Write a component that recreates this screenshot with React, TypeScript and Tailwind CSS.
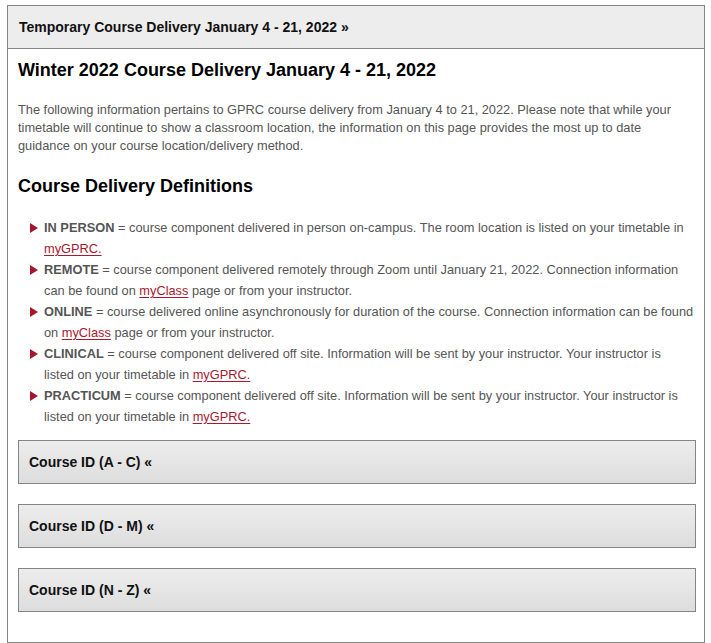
import type { ReactNode } from "react";

const LINK = "text-[#a6192e] underline underline-offset-2";

type Def = { label: string; body: ReactNode };

const DEFS: Def[] = [
  {
    label: "IN PERSON",
    body: (
      <>
        {" "}= course component delivered in person on-campus. The room location is listed on your timetable in{" "}
        <a className={LINK}>myGPRC.</a>
      </>
    ),
  },
  {
    label: "REMOTE",
    body: (
      <>
        {" "}= course component delivered remotely through Zoom until January 21, 2022. Connection information can be found on{" "}
        <a className={LINK}>myClass</a> page or from your instructor.
      </>
    ),
  },
  {
    label: "ONLINE",
    body: (
      <>
        {" "}= course delivered online asynchronously for duration of the course. Connection information can be found on{" "}
        <a className={LINK}>myClass</a> page or from your instructor.
      </>
    ),
  },
  {
    label: "CLINICAL",
    body: (
      <>
        {" "}= course component delivered off site. Information will be sent by your instructor. Your instructor is listed on your timetable in{" "}
        <a className={LINK}>myGPRC.</a>
      </>
    ),
  },
  {
    label: "PRACTICUM",
    body: (
      <>
        {" "}= course component delivered off site. Information will be sent by your instructor. Your instructor is listed on your timetable in{" "}
        <a className={LINK}>myGPRC.</a>
      </>
    ),
  },
];

const SECTIONS = ["Course ID (A - C) «", "Course ID (D - M) «", "Course ID (N - Z) «"];

export default function App() {
  return (
    <div className="min-h-[643px] bg-white pt-[5px] font-['Liberation_Sans',Arial,sans-serif]">
      <div className="ml-[7px] w-[698px] border border-[#858585]">
        <div className="flex h-[43px] items-center border-b border-[#858585] bg-[#ededed] pl-[11px] text-[14px] font-bold text-[#111]">
          Temporary Course Delivery January 4 - 21, 2022 »
        </div>

        <div className="pl-[10px] pr-[8px] pb-[30px]">
          <h1 className="mt-[10px] text-[18px] font-bold leading-[22px] text-black">
            Winter 2022 Course Delivery January 4 - 21, 2022
          </h1>
          <p className="mt-[20px] pr-[10px] text-[12.8px] leading-[18px] text-[#555]">
            The following information pertains to GPRC course delivery from January 4 to 21, 2022. Please note that while your
            timetable will continue to show a classroom location, the information on this page provides the most up to date
            guidance on your course location/delivery method.
          </p>

          <h2 className="mt-[20px] text-[18px] font-bold leading-[22px] text-black">Course Delivery Definitions</h2>

          <ul className="mt-[20px] pl-[12px] pr-[2px] text-[12.8px] leading-[21px] text-[#555]">
            {DEFS.map((d) => (
              <li key={d.label} className="flex gap-[6px]">
                <span className="flex h-[21px] w-[8px] shrink-0 items-center">
                  <span className="h-0 w-0 border-y-[5px] border-l-[8px] border-y-transparent border-l-[#a3182c]" />
                </span>
                <span>
                  <b className="font-bold">{d.label}</b>
                  {d.body}
                </span>
              </li>
            ))}
          </ul>

          <div className="mt-[13px] flex flex-col gap-[20px]">
            {SECTIONS.map((s) => (
              <div
                key={s}
                className="flex h-[44px] items-center border border-[#858585] bg-gradient-to-b from-[#ededed] to-[#dddddd] pl-[10px] text-[14px] font-bold text-[#111]"
              >
                {s}
              </div>
            ))}
          </div>
        </div>
      </div>
    </div>
  );
}
